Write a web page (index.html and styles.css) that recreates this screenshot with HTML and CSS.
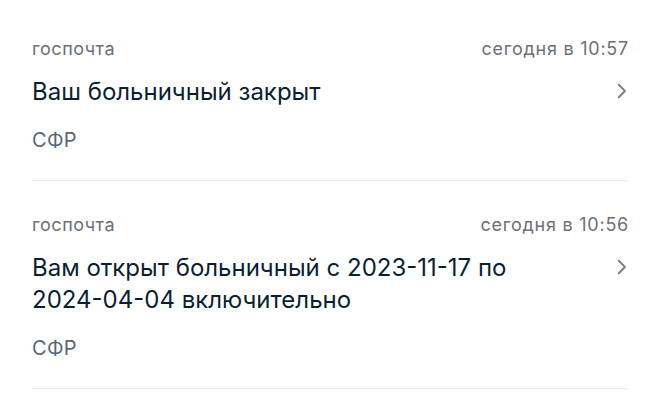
FILE: index.html
```html
<!DOCTYPE html>
<html lang="ru">
<head>
<meta charset="utf-8">
<link rel="stylesheet" href="styles.css">
</head>
<body>
<div class="list">
  <div class="item">
    <div class="meta">
      <span class="source">госпочта</span>
      <span class="date">сегодня в 10:57</span>
    </div>
    <div class="title-row">
      <div class="title">Ваш больничный закрыт</div>
      <svg class="chev" width="10" height="16" viewBox="0 0 10 16"><path d="M1.8 1.8 L8 8 L1.8 14.2" fill="none" stroke="#7b8089" stroke-width="2" stroke-linecap="round" stroke-linejoin="round"/></svg>
    </div>
    <div class="sender">СФР</div>
  </div>
  <div class="item">
    <div class="meta">
      <span class="source">госпочта</span>
      <span class="date">сегодня в 10:56</span>
    </div>
    <div class="title-row">
      <div class="title">Вам открыт больничный с <span class="nw">2023-11-17</span> по <span class="nw">2024-04-04</span> включительно</div>
      <svg class="chev" width="10" height="16" viewBox="0 0 10 16"><path d="M1.8 1.8 L8 8 L1.8 14.2" fill="none" stroke="#7b8089" stroke-width="2" stroke-linecap="round" stroke-linejoin="round"/></svg>
    </div>
    <div class="sender">СФР</div>
  </div>
</div>
</body>
</html>
```
FILE: styles.css
```css
html, body {
  margin: 0;
  padding: 0;
  background: #ffffff;
}
body {
  font-family: Inter, "Noto Sans", sans-serif;
  color: #0b1f33;
}
.list {
  padding: 5px 32px 0;
}
.item {
  padding-top: 32px;
  padding-bottom: 27px;
  border-bottom: 1px solid #e6e8ec;
  display: flex;
  flex-direction: column;
}
.meta {
  display: flex;
  justify-content: space-between;
  font-size: 18px;
  line-height: 24px;
  color: #6c7078;
  letter-spacing: 0.5px;
}
.date {
  margin-right: -1px;
  letter-spacing: 0.75px;
}
.title-row {
  display: flex;
  align-items: flex-start;
  gap: 12px;
  margin-top: 15px;
}
.title {
  flex: 1;
  min-width: 0;
  font-size: 24px;
  line-height: 32px;
  color: #0b1f33;
}
.nw {
  white-space: nowrap;
}
.chev {
  flex: none;
  margin-top: 7px;
  margin-right: 1px;
}
.sender {
  margin-top: 19px;
  font-size: 20px;
  line-height: 26px;
  color: #5c6577;
  letter-spacing: 0.3px;
}
```
